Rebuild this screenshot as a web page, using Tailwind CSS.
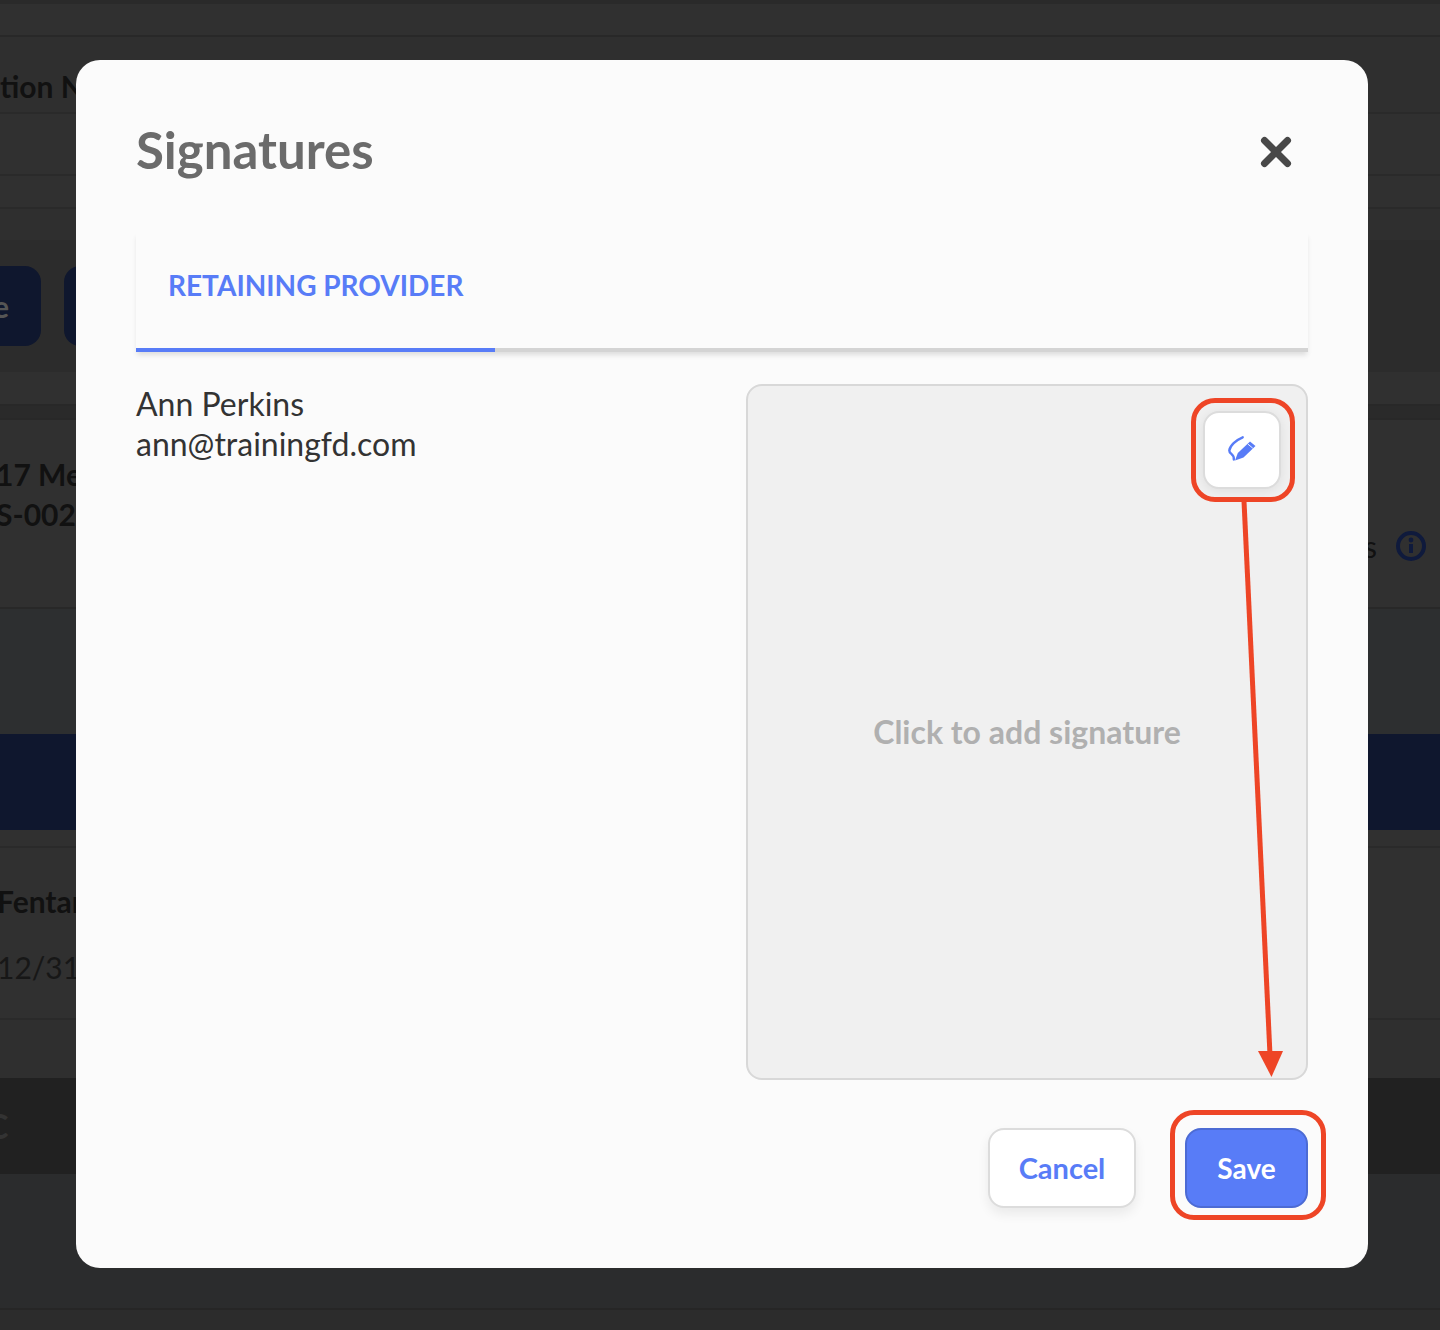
<!DOCTYPE html>
<html lang="en">
<head>
  <meta charset="UTF-8" />
  <meta name="viewport" content="width=device-width, initial-scale=1" />
  <title>Signatures</title>
  <script src="https://cdn.jsdelivr.net/npm/@tailwindcss/browser@4"></script>
</head>
<body class="relative h-[1330px] w-[1440px] overflow-hidden bg-[#2f2f2f] font-['Lato',sans-serif]">

  <!-- dimmed page behind the modal -->
  <div class="flex h-[1330px] flex-col text-[30px] leading-[40px] text-[#111111]">
    <div class="h-[4px] bg-[#2a2a2a]"></div>
    <div class="h-[33px] border-b-2 border-[#282828] bg-[#303030]"></div>
    <div class="flex h-[77px] items-center border-b-2 border-[#2a2a2a] bg-[#2f2f2f] pt-[22px] font-bold">
      <span class="-ml-[15px] whitespace-nowrap">ation Name</span>
    </div>
    <div class="h-[62px] border-b-2 border-[#2a2a2a] bg-[#303030]"></div>
    <div class="h-[33px] border-b-2 border-[#2a2a2a] bg-[#303030]"></div>
    <div class="h-[31px] bg-[#2f2f2f]"></div>
    <div class="flex h-[132px] items-center gap-[23px] bg-[#2c2c2c]">
      <div class="flex h-[80px] w-[41px] items-center justify-end rounded-r-[16px] bg-[#0f172e] pr-[32px] font-bold text-[#555555]">e</div>
      <div class="h-[80px] w-[60px] rounded-[16px] bg-[#0f172e]"></div>
    </div>
    <div class="h-[32px] bg-[#303030]"></div>
    <div class="h-[16px] border-y-2 border-[#282828] bg-[#2a2a2a]"></div>
    <div class="flex h-[189px] items-center justify-between border-b-2 border-[#282828] bg-[#303030] pb-[40px] font-bold">
      <div class="-ml-[4px] whitespace-nowrap">
        <p>17 Medic</p>
        <p>S-002</p>
      </div>
      <div class="flex items-center gap-[18px] pr-[13px] pt-[104px]">
        <span class="font-normal">s</span>
        <svg class="h-[32px] w-[32px]" viewBox="0 0 32 32" fill="none">
          <circle cx="16" cy="16" r="13" stroke="#0f1a3c" stroke-width="4" />
          <rect x="14" y="14" width="4" height="9" fill="#0f1a3c" />
          <circle cx="16" cy="10" r="2.4" fill="#0f1a3c" />
        </svg>
      </div>
    </div>
    <div class="h-[125px] bg-[#2d2f30]"></div>
    <div class="h-[96px] bg-[#0f172e]"></div>
    <div class="h-[18px] border-b-2 border-[#2a2a2a] bg-[#303030]"></div>
    <div class="flex h-[172px] flex-col gap-[26px] border-b-2 border-[#2a2a2a] bg-[#303030] pt-[33px]">
      <span class="-ml-[3px] whitespace-nowrap font-bold">Fentanyl</span>
      <span class="-ml-[3px] whitespace-nowrap text-[#171717]">12/31/2024</span>
    </div>
    <div class="h-[58px] bg-[#2f2f2f]"></div>
    <div class="flex h-[96px] items-center bg-[#212121] text-[34px] font-bold text-[#333333]"><span class="-ml-[14px]">C</span></div>
    <div class="h-[136px] border-b-2 border-[#262626] bg-[#2b2c2d]"></div>
    <div class="flex-1 bg-[#2c2c2c]"></div>
  </div>

  <!-- modal -->
  <div class="absolute left-[76px] top-[60px] flex h-[1208px] w-[1292px] flex-col rounded-[24px] bg-[#fbfbfb] px-[60px]">
    <div class="flex h-[172px] shrink-0 items-start justify-between pt-[60px]">
      <h2 class="text-[51px] font-bold leading-[60px] text-[#6b6b6b]">Signatures</h2>
      <svg class="mr-[16px] mt-[16px] h-[32px] w-[32px]" viewBox="0 0 32 32" fill="none">
        <path d="M4.500 4.500 27.500 27.500M27.500 4.500 4.500 27.500" stroke="#484848" stroke-width="7" stroke-linecap="round" />
      </svg>
    </div>

    <div class="flex h-[120px] shrink-0 border-b-[4px] border-[#d4d4d4] shadow-[0_4px_5px_-1px_rgba(0,0,0,0.12)]">
      <div class="-mb-[4px] flex h-[120px] w-[359px] items-start border-b-[4px] border-[#587cf7] pl-[32px] pt-[33px] text-[28px] font-bold leading-[40px] text-[#587cf7]">RETAINING PROVIDER</div>
    </div>

    <div class="flex shrink-0 justify-between pt-[32px]">
      <div class="text-[32px] leading-[40px] text-[#333333]">
        <p>Ann Perkins</p>
        <p>ann@trainingfd.com</p>
      </div>
      <div class="relative flex h-[696px] w-[562px] items-center justify-center rounded-[16px] border-2 border-[#d8d8d8] bg-[#f0f0f0]">
        <span class="text-[32px] font-bold leading-[40px] text-[#b0b0b0]">Click to add signature</span>
        <div class="absolute left-[455px] top-[25px] flex h-[78px] w-[78px] items-center justify-center rounded-[16px] border-2 border-[#dcdcdc] bg-white shadow-[0_2px_12px_rgba(0,0,0,0.08)]">
          <svg class="h-[30px] w-[30px]" viewBox="0 0 30 30" fill="none">
            <path d="M15.700 2.300C9 5 2.800 11 2.300 15.500C2.200 19.500 7.500 18.500 6.800 24.500" stroke="#587cf7" stroke-width="2.400" stroke-linecap="round" />
            <path d="M8 25.500 10.800 18 23 6.500 28.500 11 16.500 22.500Z" fill="#587cf7" />
            <path d="M20.800 9 25.800 13.200" stroke="#ffffff" stroke-width="0.900" />
          </svg>
        </div>
      </div>
    </div>

    <div class="flex shrink-0 items-start justify-end gap-[49px] pt-[48px]">
      <button class="h-[80px] w-[148px] rounded-[16px] border-2 border-[#dcdcdc] bg-white text-[29px] font-bold text-[#587cf7] shadow-[0_6px_12px_rgba(0,0,0,0.07)]">Cancel</button>
      <button class="h-[80px] w-[123px] rounded-[16px] border-2 border-[#4c6bd4] bg-[#587cf7] text-[28px] font-bold text-white">Save</button>
    </div>
  </div>

  <!-- red annotations -->
  <div class="absolute left-[1191px] top-[398px] h-[104px] w-[104px] rounded-[24px] border-[5px] border-[#ee4526]"></div>
  <div class="absolute left-[1170px] top-[1110px] h-[110px] w-[156px] rounded-[24px] border-[5px] border-[#ee4526]"></div>
  <svg class="absolute left-[1230px] top-[495px] h-[590px] w-[60px]" viewBox="0 0 60 590" fill="none">
    <path d="M14 6 40 560" stroke="#ee4526" stroke-width="5" />
    <path d="M28 556H53L41.500 582Z" fill="#ee4526" />
  </svg>
</body>
</html>
